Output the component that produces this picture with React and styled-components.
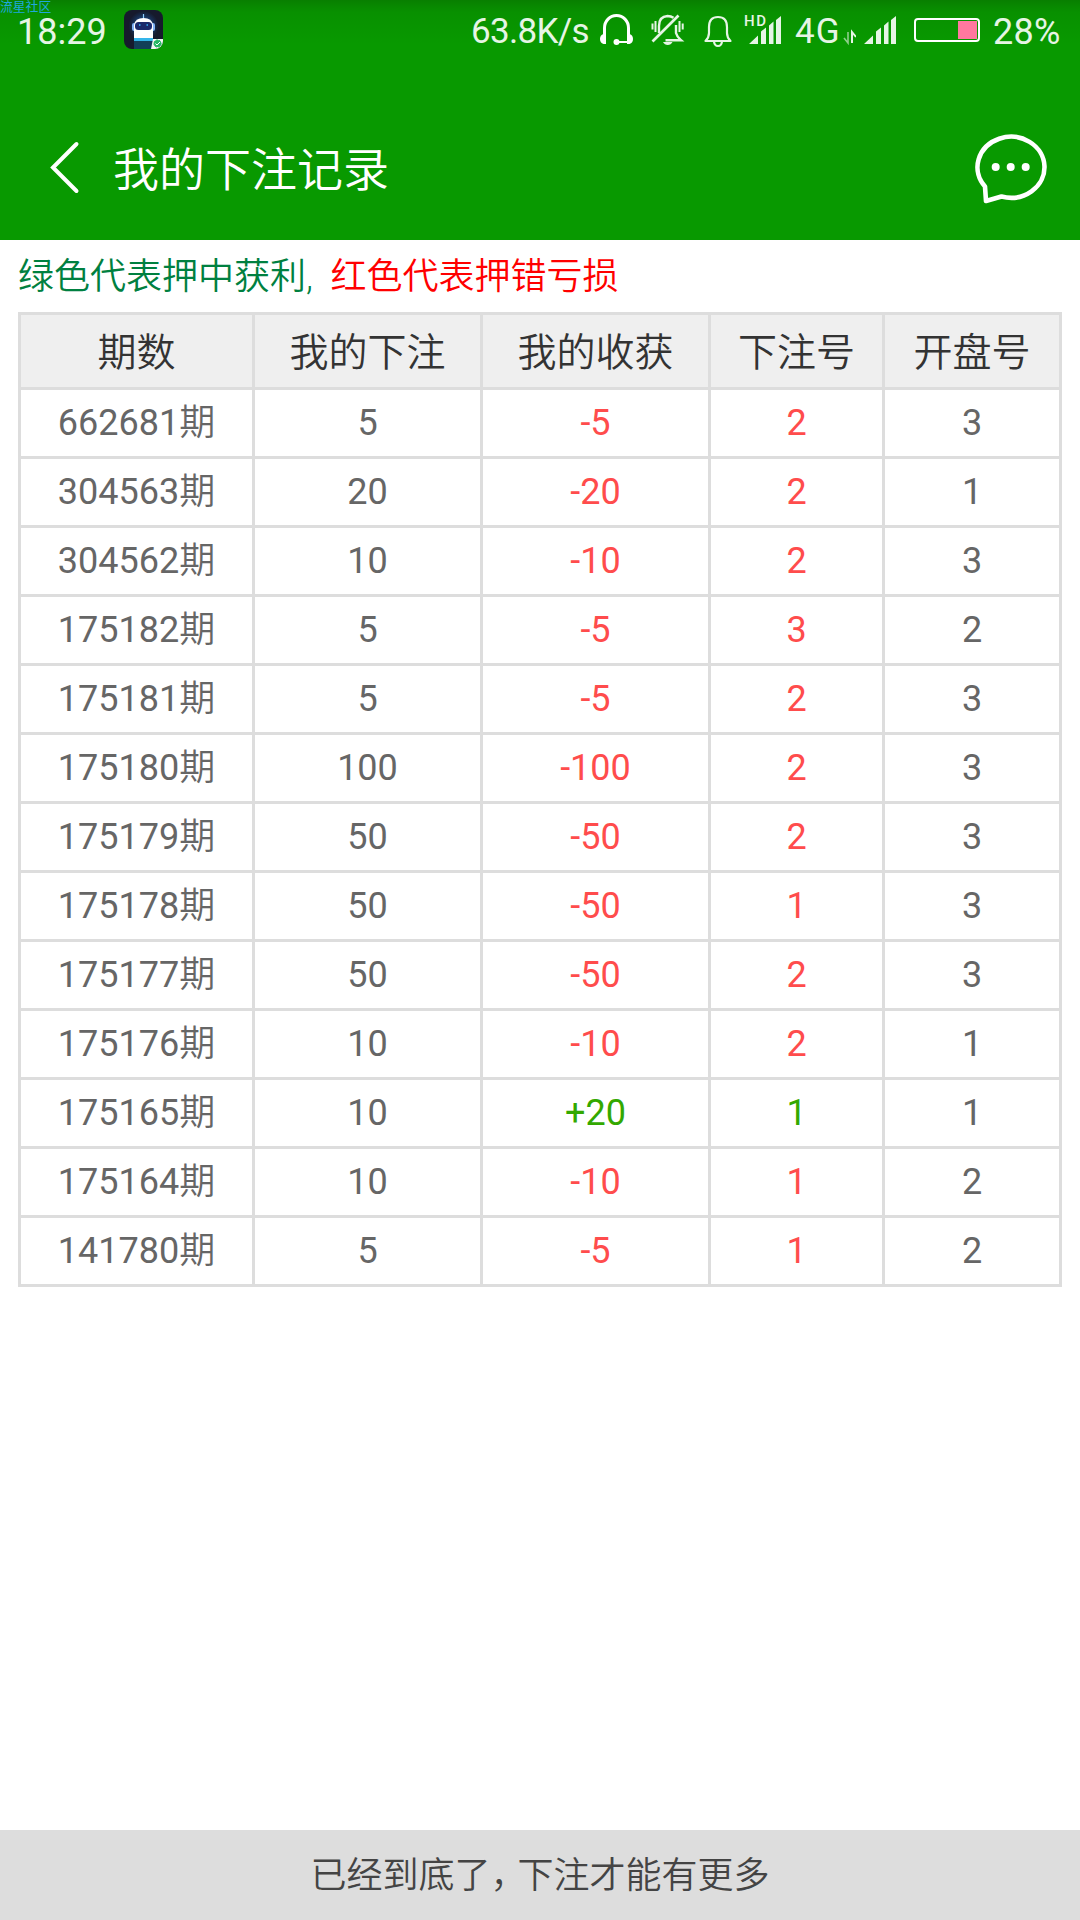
import React from 'react';
import styled, { createGlobalStyle } from 'styled-components';

const GlobalStyle = createGlobalStyle`
    * {
        box-sizing: border-box;
    }
    body {
        margin: 0;
        background: #fff;
        font-family: Roboto, 'Noto Sans CJK SC', sans-serif;
    }
`;

const Page = styled.div`
    position: relative;
    display: flex;
    flex-direction: column;
    width: 1080px;
    height: 1920px;
    overflow: hidden;
    background: #fff;
`;

const Top = styled.header`
    height: 240px;
    color: #fff;
    background: linear-gradient(#087f00 0, #089000 12px, #089900 44px);
`;

const Watermark = styled.div`
    position: absolute;
    top: 0;
    left: 0;
    font-size: 12.8px;
    line-height: 13px;
    color: #1fa8dc;
`;

const StatusBar = styled.div`
    display: flex;
    align-items: flex-start;
    height: 96px;
    padding: 0 18px 0 17px;
`;

const StatusText = styled.span`
    width: ${(props) => props.$width}px;
    padding-top: 14px;
    font-size: ${(props) => props.$size || 36}px;
    line-height: 36px;
    letter-spacing: ${(props) => props.$spacing || 0}px;
    white-space: nowrap;
    color: #e6f5e5;
`;

const StatusIcon = styled.svg`
    display: block;
    flex: none;
    margin-right: ${(props) => props.$gap || 0}px;
`;

const Spacer = styled.div`
    flex: 1;
`;

const NavBar = styled.div`
    display: flex;
    align-items: center;
    height: 144px;
    padding: 0 31px 0 48px;
`;

const Title = styled.h1`
    flex: 1;
    margin: 4px 0 0 31px;
    font-size: 46px;
    font-weight: 350;
    line-height: 60px;
`;

const Legend = styled.p`
    margin: 0;
    padding: 1px 18px 0;
    height: 72px;
    font-size: 36px;
    font-weight: 350;
    line-height: 72px;
    white-space: pre;
    color: #008040;
`;

const LoseText = styled.span`
    color: #ff0000;
`;

const Table = styled.table`
    width: 1044px;
    margin: 0 18px;
    table-layout: fixed;
    border-collapse: separate;
    border-spacing: 3px;
    background: #ddd;
`;

const HeadCell = styled.th`
    width: ${(props) => props.$width}px;
    height: 72px;
    padding: 4px 0 0;
    font-size: 39px;
    font-weight: 350;
    line-height: 68px;
    color: #333;
    background: #efefef;
`;

const tones = {
    lose: '#ff4c4c',
    win: '#33a800',
};

const Cell = styled.td`
    height: 66px;
    padding: 0;
    font-size: 36px;
    line-height: 66px;
    text-align: center;
    color: ${(props) => tones[props.$tone] || '#666'};
    background: #fff;
`;

const Unit = styled.span`
    font-weight: 350;
`;

const Footer = styled.footer`
    height: 90px;
    padding-top: 1px;
    margin-top: auto;
    font-size: 36px;
    font-weight: 350;
    line-height: 90px;
    text-align: center;
    color: #444;
    background: #ddd;
`;

const Comma = styled.span`
    letter-spacing: -9px;
`;

const columns = [
    { label: '期数', width: 231 },
    { label: '我的下注', width: 225 },
    { label: '我的收获', width: 225 },
    { label: '下注号', width: 171 },
    { label: '开盘号', width: 174 },
];

const records = [
    ['662681', 5, '-5', 2, 3],
    ['304563', 20, '-20', 2, 1],
    ['304562', 10, '-10', 2, 3],
    ['175182', 5, '-5', 3, 2],
    ['175181', 5, '-5', 2, 3],
    ['175180', 100, '-100', 2, 3],
    ['175179', 50, '-50', 2, 3],
    ['175178', 50, '-50', 1, 3],
    ['175177', 50, '-50', 2, 3],
    ['175176', 10, '-10', 2, 1],
    ['175165', 10, '+20', 1, 1],
    ['175164', 10, '-10', 1, 2],
    ['141780', 5, '-5', 1, 2],
];

const RobotIcon = () => (
    <StatusIcon width="39" height="60" viewBox="0 0 39 60">
        <defs>
            <radialGradient id="robotGlow">
                <stop offset="0" stopColor="#1b5fae" />
                <stop offset="1" stopColor="#161a2c" />
            </radialGradient>
        </defs>
        <rect y="10" width="39" height="39" rx="8" fill="#161a2c" />
        <circle cx="19.5" cy="26" r="15" fill="url(#robotGlow)" />
        <path d="M19.5 14v5" stroke="#8fd0ff" strokeWidth="1.2" />
        <rect x="8" y="23" width="23" height="8" rx="2" fill="#7fb2f5" />
        <path d="M10 30v-5q1-7 9.500-7t9.500 7v5z" fill="#fff" />
        <rect x="11" y="22" width="17" height="8" rx="3.500" fill="#1b2a6b" />
        <path d="M15 25h1.500M22.500 25h1.500" stroke="#38b6ff" strokeWidth="1.500" />
        <path d="M10 30h19v9H10z" fill="#fff" />
        <path d="M10 38h19v3H10z" fill="#35b5ea" />
        <path d="M10 41h19v8H10z" fill="#123f58" />
        <path d="M29 39h10v2a8 8 0 0 1-8 8h-4z" fill="#f4f8f4" />
        <circle cx="33.500" cy="43.500" r="3.600" fill="#25b864" stroke="#25b864" strokeDasharray="2 1" />
        <path d="M31.500 43.500l1.500 1.500 3-3" fill="none" stroke="#fff" />
    </StatusIcon>
);

const HeadsetIcon = () => (
    <StatusIcon width="37" height="60" viewBox="598 0 37 60" $gap={13}>
        <path d="M604.500 37v-9a12 12.500 0 0 1 24 0v9" fill="none" stroke="#fff" strokeWidth="3" />
        <path d="M606 34v10h-2.500q-3.500-1-3.500-5t3.500-5zM627 34v10h2.500q3.500-1 3.500-5t-3.500-5z" fill="#fff" />
        <path d="M616 42h12" stroke="#fff" strokeWidth="2" />
        <circle cx="616.500" cy="42" r="3" fill="#fff" />
    </StatusIcon>
);

const MutedBellIcon = () => (
    <StatusIcon width="39" height="60" viewBox="648 0 39 60" $gap={15}>
        <g fill="none" stroke="#e6f5e5" strokeWidth="2.400">
            <path d="M659 33v-7q0-9.500 8.500-10 3.500 0 6 1.800M676 25v8q1 4 5 7.200h-15.500" />
            <path d="M655.500 21v11M652.500 23.500v6M679.500 21v11M682.700 23.500v6" strokeWidth="2" />
            <path d="M652.500 41.500l26-26" strokeWidth="2.600" />
        </g>
        <path d="M663 42h9.500q-1.500 3-4.750 3t-4.750-3z" fill="#e6f5e5" />
    </StatusIcon>
);

const BellIcon = () => (
    <StatusIcon width="32" height="60" viewBox="702 0 32 60" $gap={10}>
        <g fill="none" stroke="#e6f5e5" strokeWidth="2.200">
            <path d="M705.500 41q3.500-3.500 3.500-8v-6q0-10 9-10t9 10v6q0 4.500 3.500 8z" strokeLinejoin="round" />
            <path d="M714 41.500q.5 4.500 4 4.500t4-4.500" />
        </g>
    </StatusIcon>
);

// four bars with slanted tops, drawn from x = 4
const Bars = () => (
    <path
        d="M4 44l9-8.500v8.500zM16 44v-12.500l5-4v16.500zM24 44v-18.500l4.500-4v22.500zM31 44v-24l5-4v28z"
        fill="#e6f5e5"
    />
);

const HdLabel = styled.text`
    font: 500 15px Roboto, sans-serif;
    fill: #e6f5e5;
`;

const HdSignalIcon = () => (
    <StatusIcon width="39" height="60" viewBox="-1 0 39 60" $gap={12}>
        <HdLabel x="-1" y="26" textLength="22">HD</HdLabel>
        <Bars />
    </StatusIcon>
);

const DataArrowsIcon = () => (
    <StatusIcon width="13" height="60" viewBox="843 0 13 60" $gap={7}>
        <path d="M848 32v11l-4-5" fill="none" stroke="#8fcf8b" strokeWidth="1.600" />
        <path d="M852 43v-11l4 5" fill="none" stroke="#e6f5e5" strokeWidth="2" />
    </StatusIcon>
);

const SignalIcon = () => (
    <StatusIcon width="33" height="60" viewBox="3 0 33 60" $gap={18}>
        <Bars />
    </StatusIcon>
);

const BatteryIcon = () => (
    <StatusIcon width="66" height="60" viewBox="0 0 66 60" $gap={13}>
        <rect x="1" y="19" width="64" height="22" rx="3" fill="none" stroke="#fff" strokeWidth="2" />
        <rect x="44" y="21" width="19" height="18" fill="#ff789f" />
    </StatusIcon>
);

const BackIcon = () => (
    <svg width="34" height="56" viewBox="0 0 34 56">
        <path d="M28.500 4L5 27.500l23.500 23.500" fill="none" stroke="#fff" strokeWidth="4" strokeLinecap="round" />
    </svg>
);

const ChatIcon = () => (
    <svg width="75" height="72" viewBox="0 -2 75 72">
        <path
            d="M11 52.500A33.500 30.500 0 1 1 27.500 62.500L12 67z"
            fill="none"
            stroke="#fff"
            strokeWidth="4.600"
            strokeLinejoin="round"
        />
        <circle cx="21.700" cy="33" r="4" fill="#fff" />
        <circle cx="36.700" cy="33" r="4" fill="#fff" />
        <circle cx="51.700" cy="33" r="4" fill="#fff" />
    </svg>
);

const RecordRow = ({ record }) => {
    const [issue, bet, profit, betNo, openNo] = record;
    const tone = profit.startsWith('+') ? 'win' : 'lose';

    return (
        <tr>
            <Cell>{issue}<Unit>期</Unit></Cell>
            <Cell>{bet}</Cell>
            <Cell $tone={tone}>{profit}</Cell>
            <Cell $tone={tone}>{betNo}</Cell>
            <Cell>{openNo}</Cell>
        </tr>
    );
};

const App = () => (
    <>
        <GlobalStyle />
        <Page>
            <Top>
                <StatusBar>
                    <StatusText $width={107}>18:29</StatusText>
                    <RobotIcon />
                    <Spacer />
                    <StatusText $width={127} $size={35} $spacing={-0.7}>63.8K/s</StatusText>
                    <HeadsetIcon />
                    <MutedBellIcon />
                    <BellIcon />
                    <HdSignalIcon />
                    <StatusText $width={48} $size={35} $spacing={1}>4G</StatusText>
                    <DataArrowsIcon />
                    <SignalIcon />
                    <BatteryIcon />
                    <StatusText $width={69} $size={36} $spacing={0.3}>28%</StatusText>
                </StatusBar>
                <NavBar>
                    <BackIcon />
                    <Title>我的下注记录</Title>
                    <ChatIcon />
                </NavBar>
            </Top>
            <Legend>
                绿色代表押中获利,{'  '}
                <LoseText>红色代表押错亏损</LoseText>
            </Legend>
            <Table>
                <thead>
                    <tr>
                        {columns.map((col) => (
                            <HeadCell key={col.label} $width={col.width}>{col.label}</HeadCell>
                        ))}
                    </tr>
                </thead>
                <tbody>
                    {records.map((record) => (
                        <RecordRow key={record[0]} record={record} />
                    ))}
                </tbody>
            </Table>
            <Footer>已经到底了<Comma>，</Comma>下注才能有更多</Footer>
            <Watermark>流星社区</Watermark>
        </Page>
    </>
);

export default App;
